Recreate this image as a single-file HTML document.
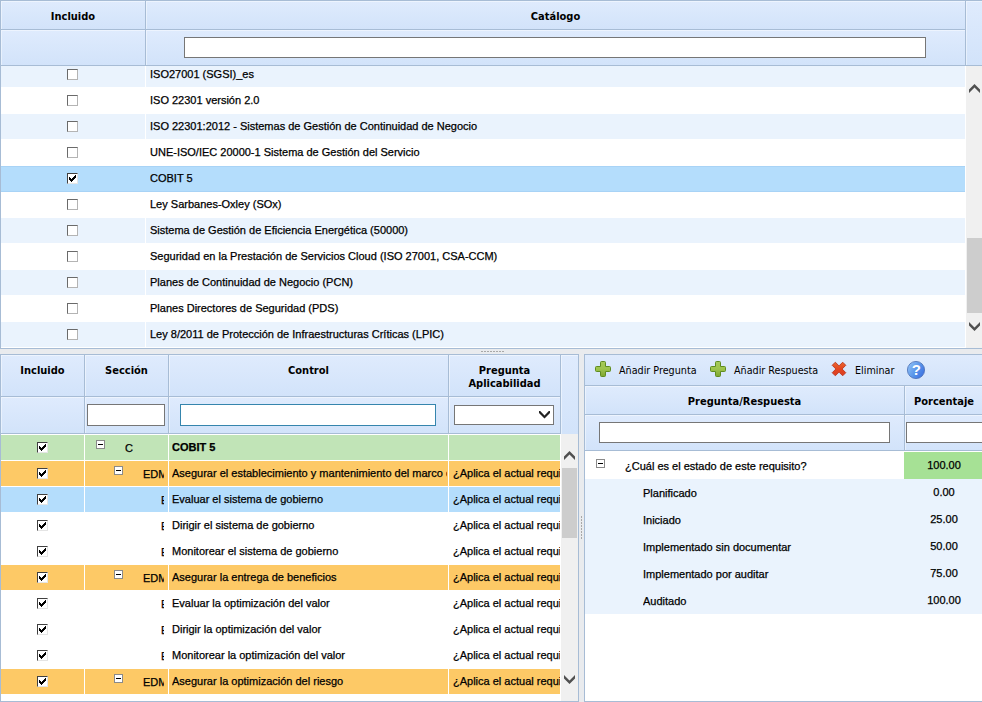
<!DOCTYPE html><html lang="es"><head><meta charset="utf-8"><title>Catálogo</title><style>
html,body{margin:0;padding:0;}
body{width:982px;height:702px;overflow:hidden;background:#e9ebee;position:relative;font-family:"Liberation Sans",sans-serif;font-size:12px;color:#000;}
div,span{box-sizing:border-box;}
.abs{position:absolute;}
.panel{position:absolute;overflow:hidden;background:#fff;border:1px solid #a7bcd5;}
.hd{position:absolute;background:linear-gradient(#dfebfd,#d2e3fa);border-right:1px solid #a7bcd5;border-bottom:1px solid #a7bcd5;font-family:"DejaVu Sans Condensed","Liberation Sans",sans-serif;font-weight:bold;font-size:11px;text-align:center;line-height:13px;color:#000;box-shadow:inset 1px 1px 0 rgba(255,255,255,.45);}
.fl{position:absolute;background:linear-gradient(#dfebfd,#d2e3fa);border-right:1px solid #a7bcd5;border-bottom:1px solid #a7bcd5;box-shadow:inset 1px 1px 0 rgba(255,255,255,.45);}
.inp{position:absolute;background:#fff;border:1px solid #767676;}
.row{position:absolute;left:0;height:26px;}
.cell{position:absolute;top:0;height:26px;line-height:26px;white-space:nowrap;overflow:hidden;font-size:11px;-webkit-text-stroke:0.25px #000;}
.cb{position:absolute;width:11px;height:11px;background:#fff;border:1px solid;border-color:#6a6a6a #b4b4b4 #b4b4b4 #6a6a6a;}
.cb.on{border-color:#404040 #e4e4e4 #e4e4e4 #404040;}
.cb svg{position:absolute;}
.sb{position:absolute;background:#f0f0f0;}
.th{position:absolute;background:#cdcdcd;}
.ex{position:absolute;width:9px;height:9px;background:#fff;border:1px solid #8a8a8a;}
.ex i{position:absolute;left:1px;top:3px;width:5px;height:1px;background:#000;}
.tb{position:absolute;font-family:"DejaVu Sans Condensed","Liberation Sans",sans-serif;font-size:10.7px;line-height:14px;white-space:nowrap;color:#000;}
</style></head><body>
<div class="panel" style="left:0;top:0;width:990px;height:349px;">
<div class="hd" style="left:0;top:0;width:145px;height:29px;padding-top:9px">Incluido</div>
<div class="hd" style="left:145px;top:0;width:820px;height:29px;padding-top:9px">Catálogo</div>
<div class="hd" style="left:965px;top:0;width:30px;height:65px;"></div>
<div class="fl" style="left:0;top:29px;width:145px;height:36px;"></div>
<div class="fl" style="left:145px;top:29px;width:820px;height:36px;"><div class="inp" style="left:38px;top:7px;width:742px;height:21px"></div></div>
<div class="abs" style="left:0;top:65px;width:964px;height:282px;overflow:hidden;">
<div class="row" style="top:-4px;width:964px;background:#eaf3fd;border-bottom:1px solid #fff">
<div class="cb" style="left:66px;top:7px"></div>
<div class="abs" style="left:144px;top:0;width:1px;height:26px;background:#fff"></div>
<div class="cell" style="left:149px;top:0px;width:810px;line-height:24px">ISO27001 (SGSI)_es</div>
</div>
<div class="row" style="top:22px;width:964px;background:#fff;border-bottom:1px solid #fff">
<div class="cb" style="left:66px;top:7px"></div>
<div class="cell" style="left:149px;top:0px;width:810px;line-height:24px">ISO 22301 versión 2.0</div>
</div>
<div class="row" style="top:48px;width:964px;background:#eaf3fd;border-bottom:1px solid #fff">
<div class="cb" style="left:66px;top:7px"></div>
<div class="abs" style="left:144px;top:0;width:1px;height:26px;background:#fff"></div>
<div class="cell" style="left:149px;top:0px;width:810px;line-height:24px">ISO 22301:2012 - Sistemas de Gestión de Continuidad de Negocio</div>
</div>
<div class="row" style="top:74px;width:964px;background:#fff;border-bottom:1px solid #fff">
<div class="cb" style="left:66px;top:7px"></div>
<div class="cell" style="left:149px;top:0px;width:810px;line-height:24px">UNE-ISO/IEC 20000-1 Sistema de Gestión del Servicio</div>
</div>
<div class="row" style="top:100px;width:964px;background:#b4ddfc;border-top:1px solid #a8d3f6;border-bottom:1px solid #a8d3f6">
<div class="cb on" style="left:66px;top:6px"><svg width="7" height="7" viewBox="0 0 7 7" shape-rendering="crispEdges" style="left:1px;top:1px"><path d="M0 2v3h1v1h1v1h1v-1h1v-1h1v-1h1v-1h1v-3h-1v1h-1v1h-1v1h-1v1h-1v-1h-1v-1z" fill="#000"/></svg></div>
<div class="cell" style="left:149px;top:-1px;width:810px;line-height:24px">COBIT 5</div>
</div>
<div class="row" style="top:126px;width:964px;background:#fff;border-bottom:1px solid #fff">
<div class="cb" style="left:66px;top:7px"></div>
<div class="cell" style="left:149px;top:0px;width:810px;line-height:24px">Ley Sarbanes-Oxley (SOx)</div>
</div>
<div class="row" style="top:152px;width:964px;background:#eaf3fd;border-bottom:1px solid #fff">
<div class="cb" style="left:66px;top:7px"></div>
<div class="abs" style="left:144px;top:0;width:1px;height:26px;background:#fff"></div>
<div class="cell" style="left:149px;top:0px;width:810px;line-height:24px">Sistema de Gestión de Eficiencia Energética (50000)</div>
</div>
<div class="row" style="top:178px;width:964px;background:#fff;border-bottom:1px solid #fff">
<div class="cb" style="left:66px;top:7px"></div>
<div class="cell" style="left:149px;top:0px;width:810px;line-height:24px">Seguridad en la Prestación de Servicios Cloud (ISO 27001, CSA-CCM)</div>
</div>
<div class="row" style="top:204px;width:964px;background:#eaf3fd;border-bottom:1px solid #fff">
<div class="cb" style="left:66px;top:7px"></div>
<div class="abs" style="left:144px;top:0;width:1px;height:26px;background:#fff"></div>
<div class="cell" style="left:149px;top:0px;width:810px;line-height:24px">Planes de Continuidad de Negocio (PCN)</div>
</div>
<div class="row" style="top:230px;width:964px;background:#fff;border-bottom:1px solid #fff">
<div class="cb" style="left:66px;top:7px"></div>
<div class="cell" style="left:149px;top:0px;width:810px;line-height:24px">Planes Directores de Seguridad (PDS)</div>
</div>
<div class="row" style="top:256px;width:964px;background:#eaf3fd;border-bottom:1px solid #fff">
<div class="cb" style="left:66px;top:7px"></div>
<div class="abs" style="left:144px;top:0;width:1px;height:26px;background:#fff"></div>
<div class="cell" style="left:149px;top:0px;width:810px;line-height:24px">Ley 8/2011 de Protección de Infraestructuras Críticas (LPIC)</div>
</div>
</div>
<div class="sb" style="left:965px;top:65px;width:26px;height:282px;">
<svg class="abs" style="left:3px;top:18px" width="11" height="9" viewBox="0 0 11 9"><polygon points="5.5,0 0,5.5 0,9 5.5,3.5 11,9 11,5.5" fill="#505050"/></svg>
<div class="th" style="left:1px;top:172px;width:24px;height:75px"></div>
<svg class="abs" style="left:3px;top:256px" width="11" height="9" viewBox="0 0 11 9"><polygon points="5.5,9 0,3.5 0,0 5.5,5.5 11,0 11,3.5" fill="#505050"/></svg>
</div>
</div>
<div class="abs" style="left:481px;top:351px;width:24px;height:1px;background-image:repeating-linear-gradient(90deg,#a8a8a8 0 2px,transparent 2px 3px)"></div>
<div class="panel" style="left:0;top:354px;width:579px;height:348px;">
<div class="hd" style="left:0px;top:0;width:84px;height:42px;padding-top:9px">Incluido</div>
<div class="fl" style="left:0px;top:42px;width:84px;height:37px;"></div>
<div class="hd" style="left:84px;top:0;width:84px;height:42px;padding-top:9px">Sección</div>
<div class="fl" style="left:84px;top:42px;width:84px;height:37px;"></div>
<div class="hd" style="left:168px;top:0;width:280px;height:42px;padding-top:9px">Control</div>
<div class="fl" style="left:168px;top:42px;width:280px;height:37px;"></div>
<div class="hd" style="left:448px;top:0;width:112px;height:42px;padding-top:9px">Pregunta<br>Aplicabilidad</div>
<div class="fl" style="left:448px;top:42px;width:112px;height:37px;"></div>
<div class="hd" style="left:560px;top:0;width:18px;height:79px;border-bottom:none"></div>
<div class="inp" style="left:86px;top:49px;width:78px;height:22px"></div>
<div class="inp" style="left:179px;top:49px;width:256px;height:22px;border-color:#3585ad"></div>
<div class="inp" style="left:453px;top:50px;width:100px;height:20px"><svg class="abs" style="left:84px;top:5px" width="11" height="8" viewBox="0 0 11 8"><polygon points="5.5,7.5 0,2 0,0 1.2,0 5.5,4.4 9.8,0 11,0 11,2" fill="#222"/></svg></div>
<div class="abs" style="left:0;top:79px;width:560px;height:267px;overflow:hidden;background:#fff">
<div class="row" style="top:0px;width:560px;background:#fff">
<div class="abs" style="left:0;top:1px;width:83px;height:25px;background:#c1e4b7"><div class="cb on" style="left:36px;top:7px"><svg width="7" height="7" viewBox="0 0 7 7" shape-rendering="crispEdges" style="left:1px;top:1px"><path d="M0 2v3h1v1h1v1h1v-1h1v-1h1v-1h1v-1h1v-3h-1v1h-1v1h-1v1h-1v1h-1v-1h-1v-1z" fill="#000"/></svg></div></div>
<div class="abs" style="left:84px;top:1px;width:83px;height:25px;background:#c1e4b7">
<div class="ex" style="left:11px;top:5px"><i></i></div>
<div class="cell" style="left:40px;top:1px;width:39px;height:24px;line-height:25px">C</div>
</div>
<div class="abs" style="left:168px;top:1px;width:279px;height:25px;background:#c1e4b7"><div class="cell" style="left:3px;top:0;width:275px;height:25px;line-height:24px;font-weight:bold;">COBIT 5</div></div>
<div class="abs" style="left:448px;top:1px;width:111px;height:25px;background:#c1e4b7"><div class="cell" style="left:4px;top:0;width:107px;height:25px;line-height:24px"></div></div>
</div>
<div class="row" style="top:26px;width:560px;background:#fff">
<div class="abs" style="left:0;top:1px;width:83px;height:25px;background:#fdc966"><div class="cb on" style="left:36px;top:7px"><svg width="7" height="7" viewBox="0 0 7 7" shape-rendering="crispEdges" style="left:1px;top:1px"><path d="M0 2v3h1v1h1v1h1v-1h1v-1h1v-1h1v-1h1v-3h-1v1h-1v1h-1v1h-1v1h-1v-1h-1v-1z" fill="#000"/></svg></div></div>
<div class="abs" style="left:84px;top:1px;width:83px;height:25px;background:#fdc966">
<div class="ex" style="left:29px;top:5px"><i></i></div>
<div class="cell" style="left:58px;top:1px;width:21px;height:24px;line-height:25px">EDM01</div>
</div>
<div class="abs" style="left:168px;top:1px;width:279px;height:25px;background:#fdc966"><div class="cell" style="left:3px;top:0;width:275px;height:25px;line-height:24px;">Asegurar el establecimiento y mantenimiento del marco de gobierno</div></div>
<div class="abs" style="left:448px;top:1px;width:111px;height:25px;background:#fdc966"><div class="cell" style="left:4px;top:0;width:107px;height:25px;line-height:24px">¿Aplica el actual requisito?</div></div>
</div>
<div class="row" style="top:52px;width:560px;background:#fff">
<div class="abs" style="left:0;top:1px;width:83px;height:25px;background:#b4ddfc"><div class="cb on" style="left:36px;top:7px"><svg width="7" height="7" viewBox="0 0 7 7" shape-rendering="crispEdges" style="left:1px;top:1px"><path d="M0 2v3h1v1h1v1h1v-1h1v-1h1v-1h1v-1h1v-3h-1v1h-1v1h-1v1h-1v1h-1v-1h-1v-1z" fill="#000"/></svg></div></div>
<div class="abs" style="left:84px;top:1px;width:83px;height:25px;background:#b4ddfc">
<div class="cell" style="left:76px;top:1px;width:3px;height:24px;line-height:25px">EDM01.01</div>
</div>
<div class="abs" style="left:168px;top:1px;width:279px;height:25px;background:#b4ddfc"><div class="cell" style="left:3px;top:0;width:275px;height:25px;line-height:24px;">Evaluar el sistema de gobierno</div></div>
<div class="abs" style="left:448px;top:1px;width:111px;height:25px;background:#b4ddfc"><div class="cell" style="left:4px;top:0;width:107px;height:25px;line-height:24px">¿Aplica el actual requisito?</div></div>
</div>
<div class="row" style="top:78px;width:560px;background:#fff">
<div class="abs" style="left:0;top:1px;width:83px;height:25px;background:#fff"><div class="cb on" style="left:36px;top:7px"><svg width="7" height="7" viewBox="0 0 7 7" shape-rendering="crispEdges" style="left:1px;top:1px"><path d="M0 2v3h1v1h1v1h1v-1h1v-1h1v-1h1v-1h1v-3h-1v1h-1v1h-1v1h-1v1h-1v-1h-1v-1z" fill="#000"/></svg></div></div>
<div class="abs" style="left:84px;top:1px;width:83px;height:25px;background:#fff">
<div class="cell" style="left:76px;top:1px;width:3px;height:24px;line-height:25px">EDM01.02</div>
</div>
<div class="abs" style="left:168px;top:1px;width:279px;height:25px;background:#fff"><div class="cell" style="left:3px;top:0;width:275px;height:25px;line-height:24px;">Dirigir el sistema de gobierno</div></div>
<div class="abs" style="left:448px;top:1px;width:111px;height:25px;background:#fff"><div class="cell" style="left:4px;top:0;width:107px;height:25px;line-height:24px">¿Aplica el actual requisito?</div></div>
</div>
<div class="row" style="top:104px;width:560px;background:#fff">
<div class="abs" style="left:0;top:1px;width:83px;height:25px;background:#fff"><div class="cb on" style="left:36px;top:7px"><svg width="7" height="7" viewBox="0 0 7 7" shape-rendering="crispEdges" style="left:1px;top:1px"><path d="M0 2v3h1v1h1v1h1v-1h1v-1h1v-1h1v-1h1v-3h-1v1h-1v1h-1v1h-1v1h-1v-1h-1v-1z" fill="#000"/></svg></div></div>
<div class="abs" style="left:84px;top:1px;width:83px;height:25px;background:#fff">
<div class="cell" style="left:76px;top:1px;width:3px;height:24px;line-height:25px">EDM01.03</div>
</div>
<div class="abs" style="left:168px;top:1px;width:279px;height:25px;background:#fff"><div class="cell" style="left:3px;top:0;width:275px;height:25px;line-height:24px;">Monitorear el sistema de gobierno</div></div>
<div class="abs" style="left:448px;top:1px;width:111px;height:25px;background:#fff"><div class="cell" style="left:4px;top:0;width:107px;height:25px;line-height:24px">¿Aplica el actual requisito?</div></div>
</div>
<div class="row" style="top:130px;width:560px;background:#fff">
<div class="abs" style="left:0;top:1px;width:83px;height:25px;background:#fdc966"><div class="cb on" style="left:36px;top:7px"><svg width="7" height="7" viewBox="0 0 7 7" shape-rendering="crispEdges" style="left:1px;top:1px"><path d="M0 2v3h1v1h1v1h1v-1h1v-1h1v-1h1v-1h1v-3h-1v1h-1v1h-1v1h-1v1h-1v-1h-1v-1z" fill="#000"/></svg></div></div>
<div class="abs" style="left:84px;top:1px;width:83px;height:25px;background:#fdc966">
<div class="ex" style="left:29px;top:5px"><i></i></div>
<div class="cell" style="left:58px;top:1px;width:21px;height:24px;line-height:25px">EDM02</div>
</div>
<div class="abs" style="left:168px;top:1px;width:279px;height:25px;background:#fdc966"><div class="cell" style="left:3px;top:0;width:275px;height:25px;line-height:24px;">Asegurar la entrega de beneficios</div></div>
<div class="abs" style="left:448px;top:1px;width:111px;height:25px;background:#fdc966"><div class="cell" style="left:4px;top:0;width:107px;height:25px;line-height:24px">¿Aplica el actual requisito?</div></div>
</div>
<div class="row" style="top:156px;width:560px;background:#fff">
<div class="abs" style="left:0;top:1px;width:83px;height:25px;background:#fff"><div class="cb on" style="left:36px;top:7px"><svg width="7" height="7" viewBox="0 0 7 7" shape-rendering="crispEdges" style="left:1px;top:1px"><path d="M0 2v3h1v1h1v1h1v-1h1v-1h1v-1h1v-1h1v-3h-1v1h-1v1h-1v1h-1v1h-1v-1h-1v-1z" fill="#000"/></svg></div></div>
<div class="abs" style="left:84px;top:1px;width:83px;height:25px;background:#fff">
<div class="cell" style="left:76px;top:1px;width:3px;height:24px;line-height:25px">EDM02.01</div>
</div>
<div class="abs" style="left:168px;top:1px;width:279px;height:25px;background:#fff"><div class="cell" style="left:3px;top:0;width:275px;height:25px;line-height:24px;">Evaluar la optimización del valor</div></div>
<div class="abs" style="left:448px;top:1px;width:111px;height:25px;background:#fff"><div class="cell" style="left:4px;top:0;width:107px;height:25px;line-height:24px">¿Aplica el actual requisito?</div></div>
</div>
<div class="row" style="top:182px;width:560px;background:#fff">
<div class="abs" style="left:0;top:1px;width:83px;height:25px;background:#fff"><div class="cb on" style="left:36px;top:7px"><svg width="7" height="7" viewBox="0 0 7 7" shape-rendering="crispEdges" style="left:1px;top:1px"><path d="M0 2v3h1v1h1v1h1v-1h1v-1h1v-1h1v-1h1v-3h-1v1h-1v1h-1v1h-1v1h-1v-1h-1v-1z" fill="#000"/></svg></div></div>
<div class="abs" style="left:84px;top:1px;width:83px;height:25px;background:#fff">
<div class="cell" style="left:76px;top:1px;width:3px;height:24px;line-height:25px">EDM02.02</div>
</div>
<div class="abs" style="left:168px;top:1px;width:279px;height:25px;background:#fff"><div class="cell" style="left:3px;top:0;width:275px;height:25px;line-height:24px;">Dirigir la optimización del valor</div></div>
<div class="abs" style="left:448px;top:1px;width:111px;height:25px;background:#fff"><div class="cell" style="left:4px;top:0;width:107px;height:25px;line-height:24px">¿Aplica el actual requisito?</div></div>
</div>
<div class="row" style="top:208px;width:560px;background:#fff">
<div class="abs" style="left:0;top:1px;width:83px;height:25px;background:#fff"><div class="cb on" style="left:36px;top:7px"><svg width="7" height="7" viewBox="0 0 7 7" shape-rendering="crispEdges" style="left:1px;top:1px"><path d="M0 2v3h1v1h1v1h1v-1h1v-1h1v-1h1v-1h1v-3h-1v1h-1v1h-1v1h-1v1h-1v-1h-1v-1z" fill="#000"/></svg></div></div>
<div class="abs" style="left:84px;top:1px;width:83px;height:25px;background:#fff">
<div class="cell" style="left:76px;top:1px;width:3px;height:24px;line-height:25px">EDM02.03</div>
</div>
<div class="abs" style="left:168px;top:1px;width:279px;height:25px;background:#fff"><div class="cell" style="left:3px;top:0;width:275px;height:25px;line-height:24px;">Monitorear la optimización del valor</div></div>
<div class="abs" style="left:448px;top:1px;width:111px;height:25px;background:#fff"><div class="cell" style="left:4px;top:0;width:107px;height:25px;line-height:24px">¿Aplica el actual requisito?</div></div>
</div>
<div class="row" style="top:234px;width:560px;background:#fff">
<div class="abs" style="left:0;top:1px;width:83px;height:25px;background:#fdc966"><div class="cb on" style="left:36px;top:7px"><svg width="7" height="7" viewBox="0 0 7 7" shape-rendering="crispEdges" style="left:1px;top:1px"><path d="M0 2v3h1v1h1v1h1v-1h1v-1h1v-1h1v-1h1v-3h-1v1h-1v1h-1v1h-1v1h-1v-1h-1v-1z" fill="#000"/></svg></div></div>
<div class="abs" style="left:84px;top:1px;width:83px;height:25px;background:#fdc966">
<div class="ex" style="left:29px;top:5px"><i></i></div>
<div class="cell" style="left:58px;top:1px;width:21px;height:24px;line-height:25px">EDM03</div>
</div>
<div class="abs" style="left:168px;top:1px;width:279px;height:25px;background:#fdc966"><div class="cell" style="left:3px;top:0;width:275px;height:25px;line-height:24px;">Asegurar la optimización del riesgo</div></div>
<div class="abs" style="left:448px;top:1px;width:111px;height:25px;background:#fdc966"><div class="cell" style="left:4px;top:0;width:107px;height:25px;line-height:24px">¿Aplica el actual requisito?</div></div>
</div>
<div class="row" style="top:260px;width:560px;background:#fff">
<div class="abs" style="left:0;top:1px;width:83px;height:25px;background:#fff"><div class="cb on" style="left:36px;top:7px"><svg width="7" height="7" viewBox="0 0 7 7" shape-rendering="crispEdges" style="left:1px;top:1px"><path d="M0 2v3h1v1h1v1h1v-1h1v-1h1v-1h1v-1h1v-3h-1v1h-1v1h-1v1h-1v1h-1v-1h-1v-1z" fill="#000"/></svg></div></div>
<div class="abs" style="left:84px;top:1px;width:83px;height:25px;background:#fff">
<div class="cell" style="left:76px;top:1px;width:3px;height:24px;line-height:25px">EDM03.01</div>
</div>
<div class="abs" style="left:168px;top:1px;width:279px;height:25px;background:#fff"><div class="cell" style="left:3px;top:0;width:275px;height:25px;line-height:24px;">Evaluar la optimización del riesgo</div></div>
<div class="abs" style="left:448px;top:1px;width:111px;height:25px;background:#fff"><div class="cell" style="left:4px;top:0;width:107px;height:25px;line-height:24px">¿Aplica el actual requisito?</div></div>
</div>
</div>
<div class="sb" style="left:560px;top:79px;width:18px;height:267px;">
<svg class="abs" style="left:3px;top:17px" width="11" height="9" viewBox="0 0 11 9"><polygon points="5.5,0 0,5.5 0,9 5.5,3.5 11,9 11,5.5" fill="#505050"/></svg>
<div class="th" style="left:1px;top:34px;width:15px;height:70px"></div>
<svg class="abs" style="left:3px;top:241px" width="11" height="9" viewBox="0 0 11 9"><polygon points="5.5,9 0,3.5 0,0 5.5,5.5 11,0 11,3.5" fill="#505050"/></svg>
</div>
</div>
<div class="abs" style="left:581px;top:516px;width:1px;height:24px;background-image:repeating-linear-gradient(180deg,#a8a8a8 0 2px,transparent 2px 3px)"></div>
<div class="panel" style="left:584px;top:354px;width:410px;height:348px;">
<div class="abs" style="left:0;top:0;width:410px;height:31px;background:linear-gradient(#dfebfd,#d2e3fa);border-bottom:1px solid #a7bcd5"></div>
<svg class="abs" style="left:10px;top:6px" width="16" height="16" viewBox="0 0 16 16"><defs><linearGradient id="g1" x1="0" y1="0" x2="0" y2="1"><stop offset="0" stop-color="#a5c95a"/><stop offset="0.5" stop-color="#9dc44c"/><stop offset="1" stop-color="#7da530"/></linearGradient></defs><path d="M5.5 1.5 q0 -1 1 -1 h3 q1 0 1 1 v4 h4 q1 0 1 1 v3 q0 1 -1 1 h-4 v4 q0 1 -1 1 h-3 q-1 0 -1 -1 v-4 h-4 q-1 0 -1 -1 v-3 q0 -1 1 -1 h4 z" fill="url(#g1)" stroke="#5f8c20" stroke-width="1"/></svg>
<div class="tb" style="left:34px;top:9px">Añadir Pregunta</div>
<svg class="abs" style="left:125px;top:6px" width="16" height="16" viewBox="0 0 16 16"><defs><linearGradient id="g2" x1="0" y1="0" x2="0" y2="1"><stop offset="0" stop-color="#a5c95a"/><stop offset="0.5" stop-color="#9dc44c"/><stop offset="1" stop-color="#7da530"/></linearGradient></defs><path d="M5.5 1.5 q0 -1 1 -1 h3 q1 0 1 1 v4 h4 q1 0 1 1 v3 q0 1 -1 1 h-4 v4 q0 1 -1 1 h-3 q-1 0 -1 -1 v-4 h-4 q-1 0 -1 -1 v-3 q0 -1 1 -1 h4 z" fill="url(#g2)" stroke="#5f8c20" stroke-width="1"/></svg>
<div class="tb" style="left:149px;top:9px">Añadir Respuesta</div>
<svg class="abs" style="left:246px;top:6px" width="16" height="16" viewBox="0 0 16 16"><defs><linearGradient id="xg" x1="0" y1="0" x2="1" y2="1"><stop offset="0" stop-color="#ee7a3a"/><stop offset="0.5" stop-color="#e4451f"/><stop offset="1" stop-color="#d63a26"/></linearGradient></defs><g transform="translate(8,8) rotate(45)"><path d="M-2.2 -7.4 h4.4 v5.2 h5.2 v4.4 h-5.2 v5.2 h-4.4 v-5.2 h-5.2 v-4.4 h5.2 z" fill="url(#xg)" stroke="#bd3a22" stroke-width="0.9" stroke-linejoin="round"/></g></svg>
<div class="tb" style="left:270px;top:9px">Eliminar</div>
<svg class="abs" style="left:322px;top:6px" width="18" height="18" viewBox="0 0 18 18"><defs><linearGradient id="hg" x1="0" y1="0.2" x2="1" y2="0.8"><stop offset="0" stop-color="#8fc0f6"/><stop offset="0.5" stop-color="#5b97ea"/><stop offset="1" stop-color="#3a6ee0"/></linearGradient></defs><circle cx="9" cy="9" r="8.6" fill="url(#hg)" stroke="#4a6fb4" stroke-width="0.8"/><text x="9.3" y="14.3" text-anchor="middle" font-family="Liberation Sans, sans-serif" font-weight="bold" font-size="15" fill="#fff">?</text></svg>
<div class="hd" style="left:0;top:31px;width:320px;height:29px;padding-top:9px">Pregunta/Respuesta</div>
<div class="hd" style="left:320px;top:31px;width:90px;height:29px;padding-top:9px;text-align:left;padding-left:9px">Porcentaje</div>
<div class="fl" style="left:0;top:60px;width:320px;height:36px"><div class="inp" style="left:14px;top:7px;width:291px;height:21px"></div></div>
<div class="fl" style="left:320px;top:60px;width:90px;height:36px"><div class="inp" style="left:1px;top:7px;width:90px;height:21px"></div></div>
<div class="row" style="top:97px;width:410px;height:27px;background:#fff">
<div class="ex" style="left:11px;top:7px"><i></i></div>
<div class="abs" style="left:319px;top:0;width:100px;height:27px;background:#a6e195"></div>
<div class="cell" style="left:40px;width:250px;height:27px;line-height:28px">¿Cuál es el estado de este requisito?</div>
<div class="cell" style="left:320px;width:78px;height:27px;line-height:27px;text-align:center">100.00</div>
</div>
<div class="row" style="top:124px;width:410px;height:27px;background:#eaf3fd">
<div class="cell" style="left:58px;width:250px;height:27px;line-height:28px">Planificado</div>
<div class="cell" style="left:320px;width:78px;height:27px;line-height:27px;text-align:center">0.00</div>
</div>
<div class="row" style="top:151px;width:410px;height:27px;background:#eaf3fd">
<div class="cell" style="left:58px;width:250px;height:27px;line-height:28px">Iniciado</div>
<div class="cell" style="left:320px;width:78px;height:27px;line-height:27px;text-align:center">25.00</div>
</div>
<div class="row" style="top:178px;width:410px;height:27px;background:#eaf3fd">
<div class="cell" style="left:58px;width:250px;height:27px;line-height:28px">Implementado sin documentar</div>
<div class="cell" style="left:320px;width:78px;height:27px;line-height:27px;text-align:center">50.00</div>
</div>
<div class="row" style="top:205px;width:410px;height:27px;background:#eaf3fd">
<div class="cell" style="left:58px;width:250px;height:27px;line-height:28px">Implementado por auditar</div>
<div class="cell" style="left:320px;width:78px;height:27px;line-height:27px;text-align:center">75.00</div>
</div>
<div class="row" style="top:232px;width:410px;height:27px;background:#eaf3fd">
<div class="cell" style="left:58px;width:250px;height:27px;line-height:28px">Auditado</div>
<div class="cell" style="left:320px;width:78px;height:27px;line-height:27px;text-align:center">100.00</div>
</div>
</div>
</body></html>
